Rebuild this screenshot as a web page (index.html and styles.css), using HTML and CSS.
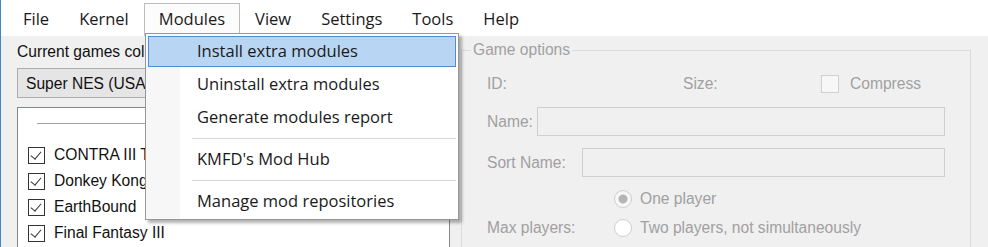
FILE: index.html
```html
<!DOCTYPE html>
<html>
	<head>
		<meta charset="UTF-8">
		<title>Hakchi</title>
		<link rel="stylesheet" href="styles.css">
	</head>
	<body>
		<div class="window">
			<div class="menubar">
				<div class="menu-item">File</div>
				<div class="menu-item">Kernel</div>
				<div class="menu-item open">Modules</div>
				<div class="menu-item">View</div>
				<div class="menu-item">Settings</div>
				<div class="menu-item">Tools</div>
				<div class="menu-item">Help</div>
			</div>

			<div class="dropdown">
				<div class="drop-item active">Install extra modules</div>
				<div class="drop-item">Uninstall extra modules</div>
				<div class="drop-item">Generate modules report</div>
				<div class="sep"></div>
				<div class="drop-item">KMFD's Mod Hub</div>
				<div class="sep"></div>
				<div class="drop-item">Manage mod repositories</div>
			</div>

			<div class="content">
				<div class="left">
					<div class="games-label">Current games collection:</div>
					<div class="combo">Super NES (USA/EUR)</div>
					<div class="games">
						<div class="games-line"></div>
						<div class="game"><span class="check"></span>CONTRA III THE ALIEN WARS</div>
						<div class="game"><span class="check"></span>Donkey Kong Country</div>
						<div class="game"><span class="check"></span>EarthBound</div>
						<div class="game"><span class="check"></span>Final Fantasy III</div>
					</div>
				</div>

				<fieldset class="options">
					<legend>Game options</legend>
					<div class="row first">
						<span class="lbl id-lbl">ID:</span>
						<span class="lbl size-lbl">Size:</span>
						<span class="box"></span>
						<span class="lbl">Compress</span>
					</div>
					<div class="row">
						<span class="lbl name-lbl">Name:</span>
						<div class="field"></div>
					</div>
					<div class="row">
						<span class="lbl sort-lbl">Sort Name:</span>
						<div class="field"></div>
					</div>
					<div class="players">
						<span class="lbl players-lbl">Max players:</span>
						<div class="radios">
							<div class="radio-row"><span class="radio on"></span>One player</div>
							<div class="radio-row"><span class="radio"></span>Two players, not simultaneously</div>
							<div class="radio-row"><span class="radio"></span>Two players, simultaneously</div>
						</div>
					</div>
				</fieldset>
			</div>
		</div>
	</body>
</html>
```

FILE: styles.css
```css
body {
	margin: 0;
	background-color: #f0f0f0;
	overflow: hidden;
}
.window {
	position: relative;
	width: 987px;
	height: 247px;
	border-left: 1px solid #3d86cc;
	overflow: hidden;
	font-family: "Liberation Sans", Arial, sans-serif;
	font-size: 15.6px;
}
.menubar {
	display: flex;
	height: 36px;
	padding-left: 7px;
	background-color: #fff;
	font-family: "Open Sans", "Noto Sans", sans-serif;
	font-size: 16.5px;
	color: #1a1a1a;
}
.menu-item {
	height: 33px;
	line-height: 30px;
	margin-top: 3px;
	padding: 0 14px;
	border: 1px solid transparent;
	border-bottom: none;
	box-sizing: border-box;
}
.menu-item.open {
	border-color: #bdbdbd;
	background-color: #fcfcfc;
}

.dropdown {
	position: absolute;
	left: 144px;
	top: 33px;
	width: 312px;
	display: flex;
	flex-direction: column;
	gap: 2px;
	padding: 2px 0;
	border: 1px solid #979797;
	background: linear-gradient(to right, #f7f7f7 34px, #fff 34px);
	box-shadow: 3px 3px 3px rgba(0, 0, 0, 0.3);
	font-family: "Open Sans", "Noto Sans", sans-serif;
	font-size: 16.5px;
	color: #1a1a1a;
	z-index: 2;
}
.drop-item {
	height: 31px;
	line-height: 28px;
	margin: 0 2px;
	padding-left: 48px;
	border: 1px solid transparent;
	box-sizing: border-box;
}
.drop-item.active {
	background-color: #b8d6f4;
	border-color: #4f8fd1;
}
.sep {
	height: 7px;
	margin: 0 2px 0 46px;
	background: linear-gradient(#fff 3px, #d7d7d7 3px, #d7d7d7 4px, #fff 4px);
}

.content {
	display: flex;
	gap: 11px;
	padding-left: 16px;
}
.left {
	width: 433px;
	flex-shrink: 0;
}
.games-label {
	margin-top: 7px;
	height: 18px;
	line-height: 18px;
	color: #111;
	white-space: nowrap;
}
.combo {
	height: 30px;
	line-height: 29px;
	margin-top: 7px;
	padding-left: 8px;
	border: 1px solid #adadad;
	background-color: #e5e5e5;
	color: #111;
	white-space: nowrap;
	box-sizing: border-box;
}
.games {
	height: 200px;
	margin-top: 9px;
	border: 1px solid #828790;
	background-color: #fff;
	padding-left: 10px;
}
.games-line {
	height: 1px;
	margin: 15px 0 18px 9px;
	background-color: #a0a0a0;
}
.game {
	display: flex;
	align-items: center;
	height: 26px;
	color: #111;
	white-space: nowrap;
}
.check {
	position: relative;
	width: 17px;
	height: 17px;
	margin-right: 9px;
	border: 1px solid #333;
	background-color: #fff;
	box-sizing: border-box;
}
.check::after {
	content: "";
	position: absolute;
	left: 4px;
	top: 1px;
	width: 5px;
	height: 9px;
	border-right: 1.5px solid #333;
	border-bottom: 1.5px solid #333;
	transform: rotate(40deg);
}

.options {
	width: 483px;
	height: 230px;
	margin: 5px 0 0 0;
	padding: 0 0 0 25px;
	border: 1px solid #dcdcdc;
	color: #a0a0a0;
}
.options legend {
	padding: 0 2px;
	margin-left: -16px;
	line-height: 18px;
}
.lbl {
	white-space: nowrap;
}
.row {
	display: flex;
	align-items: center;
	height: 29px;
	margin-top: 12px;
}
.row.first {
	margin-top: 10px;
	margin-bottom: -3px;
}
.id-lbl {
	width: 196px;
}
.size-lbl {
	width: 138px;
}
.name-lbl {
	width: 50px;
}
.sort-lbl {
	width: 95px;
}
.box {
	width: 18px;
	height: 18px;
	margin-right: 11px;
	border: 1px solid #cfcfcf;
	background-color: #f7f7f7;
	box-sizing: border-box;
}
.field {
	flex: 1;
	height: 29px;
	margin-right: 25px;
	border: 1px solid #cfcfcf;
	background-color: #f0f0f0;
	box-sizing: border-box;
}
.players {
	display: flex;
	align-items: center;
	margin-top: 7px;
}
.players-lbl {
	width: 127px;
}
.radio-row {
	display: flex;
	align-items: center;
	height: 29px;
	white-space: nowrap;
}
.radio {
	width: 18px;
	height: 18px;
	margin-right: 8px;
	border: 1px solid #cfcfcf;
	border-radius: 50%;
	background-color: #fff;
	box-sizing: border-box;
}
.radio.on {
	background: radial-gradient(circle, #b5b5b5 4px, #f7f7f7 5px);
}
```
